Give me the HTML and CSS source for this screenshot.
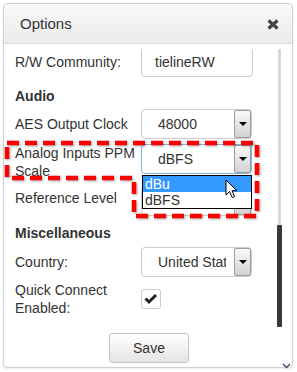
FILE: index.html
```html
<!DOCTYPE html>
<html lang="en">
<head>
    <meta charset="UTF-8">
    <meta name="viewport" content="width=device-width, initial-scale=1.0">
    <title>Options</title>
    <link rel="stylesheet" href="styles.css">
</head>
<body>
    <div class="dialog">
        <div class="dialog-header">
            <span class="dialog-title">Options</span>
            <!-- close button -->
            <svg class="close-icon" width="12" height="11" viewBox="0 0 12 11">
                <path d="M1.5 1.5 L10.5 9.5 M10.5 1.5 L1.5 9.5" stroke="#444" stroke-width="3.2" fill="none"/>
            </svg>
        </div>

        <div class="dialog-body">
            <div class="scroll-view">
                <div class="form-row first-row">
                    <label class="form-label">R/W Community:</label>
                    <div class="text-input">tielineRW</div>
                </div>

                <div class="section-title audio-title">Audio</div>

                <div class="form-row row-aes">
                    <label class="form-label">AES Output Clock</label>
                    <div class="select">
                        <span class="select-value">48000</span>
                        <span class="select-btn"><span class="caret"></span></span>
                    </div>
                </div>

                <div class="form-row row-top row-ppm">
                    <label class="form-label">Analog Inputs PPM Scale</label>
                    <div class="select focused">
                        <span class="select-value">dBFS</span>
                        <span class="select-btn"><span class="caret"></span></span>
                        <!-- opened dropdown list -->
                        <ul class="select-list">
                            <li class="active">dBu</li>
                            <li>dBFS</li>
                        </ul>
                    </div>
                </div>

                <div class="form-row row-top row-ref">
                    <label class="form-label ref-label">Reference Level</label>
                    <!-- value hidden behind the open list -->
                    <div class="select">
                        <span class="select-value"></span>
                        <span class="select-btn"><span class="caret"></span></span>
                    </div>
                </div>

                <div class="section-title misc-title">Miscellaneous</div>

                <div class="form-row row-country">
                    <label class="form-label">Country:</label>
                    <div class="select">
                        <span class="select-value">United States</span>
                        <span class="select-btn"><span class="caret"></span></span>
                    </div>
                </div>

                <div class="form-row row-quick">
                    <label class="form-label">Quick Connect Enabled:</label>
                    <div class="checkbox">
                        <svg width="18" height="18" viewBox="0 0 18 18">
                            <path d="M3.5 8.5 L7 12 L14 5" stroke="#222" stroke-width="3" fill="none"/>
                        </svg>
                    </div>
                </div>
            </div>

            <div class="scrollbar"><div class="scroll-thumb"></div></div>
        </div>

        <div class="dialog-footer">
            <button class="save-button">Save</button>
        </div>

        <svg class="scroll-arrow" width="9" height="6" viewBox="0 0 9 6">
            <path d="M1 1 L4.5 4.5 L8 1" stroke="#3a4a66" stroke-width="1.4" fill="none"/>
        </svg>
    </div>

    <!-- red dashed highlight drawn on top of the screenshot -->
    <svg class="highlight" width="297" height="372" viewBox="0 0 297 372">
        <path d="M7 143 H257 V216 H134 V178 H7 Z" fill="none" stroke="#f00" stroke-width="4.5" stroke-dasharray="12 6"/>
    </svg>

    <!-- mouse pointer -->
    <svg class="cursor" width="13" height="20" viewBox="0 0 13 20">
        <path d="M1 1 L1 16 L4.6 12.6 L7.2 18.6 L9.6 17.6 L7 11.7 L11.8 11.7 Z" fill="#fff" stroke="#000" stroke-width="1" stroke-linejoin="round"/>
    </svg>
</body>
</html>
```

FILE: styles.css
```css
/* base */
body {
    margin: 0;
    font-family: "Liberation Sans", Arial, sans-serif;
    font-size: 14px;
    color: #333;
    background: #fff;
    position: relative;
    width: 297px;
    height: 372px;
    overflow: hidden;
}

/* dialog box */
.dialog {
    position: relative;
    margin: 3px;
    width: 290px;
    height: 365px;
    box-sizing: border-box;
    border: 1px solid #cfcfcf;
    border-radius: 4px;
    box-shadow: 0 1px 2px rgba(0, 0, 0, 0.08);
    background: #fff;
}

.dialog-header {
    height: 39px;
    border-bottom: 1px solid #dcdcdc;
    border-radius: 3px 3px 0 0;
    background: linear-gradient(#f8f8f8, #ececec);
    display: flex;
    align-items: center;
    padding: 0 13px 0 16px;
}

.dialog-title {
    font-size: 15px;
    color: #333;
    flex: 1;
}

.close-icon {
    margin-top: 2px;
}

/* scrolling part */
.dialog-body {
    padding-top: 5px;
    display: flex;
}

.scroll-view {
    width: 262px;
    height: 278px;
    overflow: hidden;
    padding-left: 11px;
}

.scrollbar {
    width: 5px;
    height: 278px;
    display: flex;
    flex-direction: column;
    justify-content: flex-end;
    background: linear-gradient(to right, transparent 1px, #d9d9d9 1px, #d9d9d9 4px, transparent 4px);
}

.scroll-thumb {
    height: 102px;
    background: #383838;
    border-radius: 1px;
}

/* form rows */
.form-row {
    display: flex;
    align-items: center;
}

.row-top {
    align-items: flex-start;
}

.form-label {
    width: 126px;
    flex-shrink: 0;
    line-height: 18px;
}

.first-row {
    margin-top: -2px;
}

.section-title {
    font-weight: bold;
    line-height: 19px;
}

.audio-title {
    margin-top: 10px;
}

.row-aes {
    margin-top: 3px;
}

.row-ppm {
    margin-top: 5px;
}

.row-ref {
    margin-top: 6px;
}

.ref-label {
    padding-top: 3px;
}

.misc-title {
    margin-top: 8px;
}

.row-country {
    margin-top: 4px;
}

.row-quick {
    margin-top: 4px;
}

/* inputs */
.text-input {
    width: 112px;
    height: 30px;
    box-sizing: border-box;
    border: 1px solid #ccc;
    border-radius: 4px;
    padding-left: 13px;
    line-height: 28px;
}

.select {
    position: relative;
    width: 111px;
    height: 30px;
    box-sizing: border-box;
    border: 1px solid #ccc;
    border-radius: 4px;
    display: flex;
    align-items: center;
}

.select.focused {
    border-color: #7fb0e0;
}

.select-value {
    flex: 1;
    min-width: 0;
    padding-left: 16px;
    margin-right: 8px;
    white-space: nowrap;
    overflow: hidden;
}

.select-btn {
    width: 17px;
    height: 28px;
    flex-shrink: 0;
    box-sizing: border-box;
    border: 1px solid #9d9d9d;
    border-radius: 2px;
    background: linear-gradient(#fafafa, #d2d2d2);
    display: flex;
    align-items: center;
    justify-content: center;
}

.caret {
    width: 0;
    height: 0;
    border-left: 4px solid transparent;
    border-right: 4px solid transparent;
    border-top: 4px solid #000;
}

.select-list {
    position: absolute;
    left: 0;
    top: 30px;
    width: 110px;
    margin: 0;
    padding: 0;
    list-style: none;
    box-sizing: border-box;
    border: 1px solid #000;
    background: #fff;
    z-index: 2;
}

.select-list li {
    height: 16px;
    line-height: 16px;
    padding-left: 2px;
    font-size: 14px;
    color: #333;
}

.select-list li.active {
    background: #3399ff;
    color: #fff;
}

.checkbox {
    width: 20px;
    height: 20px;
    box-sizing: border-box;
    border: 1px solid #ccc;
    border-radius: 3px;
    display: flex;
    align-items: center;
    justify-content: center;
}

/* footer */
.dialog-footer {
    display: flex;
    justify-content: center;
    padding: 6px 0 0 2px;
}

.save-button {
    width: 80px;
    height: 30px;
    border: 1px solid #c4c4c4;
    border-radius: 3px;
    background: linear-gradient(#ffffff, #e4e4e4);
    font-family: "Liberation Sans", Arial, sans-serif;
    font-size: 14px;
    color: #333;
}

.scroll-arrow {
    position: absolute;
    right: 1px;
    bottom: -2px;
}

/* overlays */
.highlight {
    position: absolute;
    left: 0;
    top: 0;
    filter: drop-shadow(1px 1px 1px rgba(0, 0, 0, 0.35));
    z-index: 5;
}

.cursor {
    position: absolute;
    left: 225px;
    top: 179px;
    z-index: 6;
}
```
